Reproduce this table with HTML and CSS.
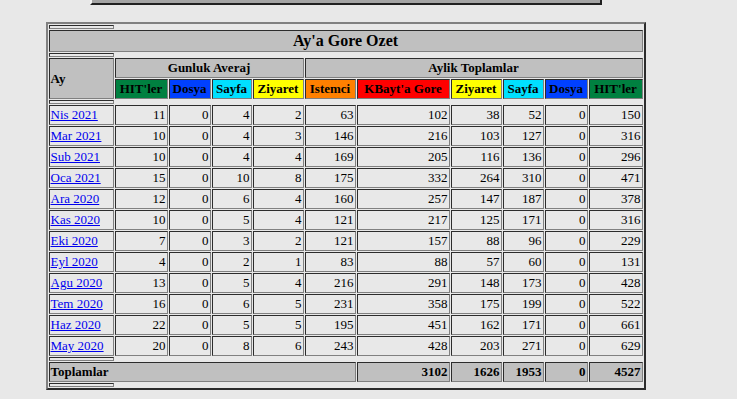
FILE: index.html
```html
<!DOCTYPE html>
<html>
<head>
<meta charset="utf-8">
<link rel="stylesheet" href="styles.css">
</head>
<body>
<div class="page">
  <div class="graph"></div>
  <table class="summary">
    <colgroup>
      <col class="w-month"><col class="w-hits1"><col class="w-files1"><col class="w-pages1"><col class="w-visits1">
      <col class="w-sites"><col class="w-kbytes"><col class="w-visits2"><col class="w-pages2"><col class="w-files2"><col class="w-hits2">
    </colgroup>
    <tr><th class="spacer"></th></tr>
    <tr><th colspan="11" class="title">Ay'a Gore Ozet</th></tr>
    <tr><th class="spacer"></th></tr>
    <tr>
      <th rowspan="2" class="month-head">Ay</th>
      <th colspan="4" class="group">Gunluk Averaj</th>
      <th colspan="6" class="group">Aylik Toplamlar</th>
    </tr>
    <tr>
      <th class="hd c-hits">HIT'ler</th>
      <th class="hd c-files">Dosya</th>
      <th class="hd c-pages">Sayfa</th>
      <th class="hd c-visits">Ziyaret</th>
      <th class="hd c-sites">Istemci</th>
      <th class="hd c-kbytes">KBayt'a Gore</th>
      <th class="hd c-visits">Ziyaret</th>
      <th class="hd c-pages">Sayfa</th>
      <th class="hd c-files">Dosya</th>
      <th class="hd c-hits">HIT'ler</th>
    </tr>
    <tr><th class="spacer"></th></tr>
    <tr><td class="mon"><a href="#">Nis 2021</a></td><td>11</td><td>0</td><td>4</td><td>2</td><td>63</td><td>102</td><td>38</td><td>52</td><td>0</td><td>150</td></tr>
    <tr><td class="mon"><a href="#">Mar 2021</a></td><td>10</td><td>0</td><td>4</td><td>3</td><td>146</td><td>216</td><td>103</td><td>127</td><td>0</td><td>316</td></tr>
    <tr><td class="mon"><a href="#">Sub 2021</a></td><td>10</td><td>0</td><td>4</td><td>4</td><td>169</td><td>205</td><td>116</td><td>136</td><td>0</td><td>296</td></tr>
    <tr><td class="mon"><a href="#">Oca 2021</a></td><td>15</td><td>0</td><td>10</td><td>8</td><td>175</td><td>332</td><td>264</td><td>310</td><td>0</td><td>471</td></tr>
    <tr><td class="mon"><a href="#">Ara 2020</a></td><td>12</td><td>0</td><td>6</td><td>4</td><td>160</td><td>257</td><td>147</td><td>187</td><td>0</td><td>378</td></tr>
    <tr><td class="mon"><a href="#">Kas 2020</a></td><td>10</td><td>0</td><td>5</td><td>4</td><td>121</td><td>217</td><td>125</td><td>171</td><td>0</td><td>316</td></tr>
    <tr><td class="mon"><a href="#">Eki 2020</a></td><td>7</td><td>0</td><td>3</td><td>2</td><td>121</td><td>157</td><td>88</td><td>96</td><td>0</td><td>229</td></tr>
    <tr><td class="mon"><a href="#">Eyl 2020</a></td><td>4</td><td>0</td><td>2</td><td>1</td><td>83</td><td>88</td><td>57</td><td>60</td><td>0</td><td>131</td></tr>
    <tr><td class="mon"><a href="#">Agu 2020</a></td><td>13</td><td>0</td><td>5</td><td>4</td><td>216</td><td>291</td><td>148</td><td>173</td><td>0</td><td>428</td></tr>
    <tr><td class="mon"><a href="#">Tem 2020</a></td><td>16</td><td>0</td><td>6</td><td>5</td><td>231</td><td>358</td><td>175</td><td>199</td><td>0</td><td>522</td></tr>
    <tr><td class="mon"><a href="#">Haz 2020</a></td><td>22</td><td>0</td><td>5</td><td>5</td><td>195</td><td>451</td><td>162</td><td>171</td><td>0</td><td>661</td></tr>
    <tr><td class="mon"><a href="#">May 2020</a></td><td>20</td><td>0</td><td>8</td><td>6</td><td>243</td><td>428</td><td>203</td><td>271</td><td>0</td><td>629</td></tr>
    <tr><th class="spacer"></th></tr>
    <tr class="totals">
      <th colspan="6" class="tot-label">Toplamlar</th>
      <th>3102</th><th>1626</th><th>1953</th><th>0</th><th>4527</th>
    </tr>
    <tr><th class="spacer"></th></tr>
  </table>
</div>
</body>
</html>
```

FILE: styles.css
```css
html, body {
  background: #e8e8e8;
}
body {
  margin: 0 8px;
  font-family: "Liberation Serif", "Times New Roman", serif;
  color: #000;
}
.page {
  width: 675px;
  display: flex;
  flex-direction: column;
  align-items: center;
}
.graph {
  width: 508px;
  height: 3px;
  background: #a4a4a4;
  border-left: 2px solid #f4f4f4;
  border-right: 2px solid #202020;
  border-bottom: 2px solid #202020;
  margin-bottom: 17px;
  margin-left: 0;
}
.summary {
  border-collapse: separate;
  border-spacing: 1px;
  border: 2px outset #808080;
  table-layout: fixed;
  width: 600px;
  font-size: 13px;
  line-height: 16px;
}
.summary td, .summary th {
  border: 1px inset #808080;
  padding: 1px;
  box-sizing: border-box;
}
.w-month { width: 65px; }
.w-hits1 { width: 53px; }
.w-files1 { width: 42px; }
.w-pages1 { width: 40px; }
.w-visits1 { width: 51px; }
.w-sites { width: 51px; }
.w-kbytes { width: 93px; }
.w-visits2 { width: 51px; }
.w-pages2 { width: 41px; }
.w-files2 { width: 43px; }
.w-hits2 { width: 54px; }

.summary th.spacer {
  height: 4px;
  padding: 0;
}
.summary th.title {
  background: #c0c0c0;
  font-size: 16px;
  line-height: 18px;
  text-align: center;
}
.summary th.month-head {
  background: #c0c0c0;
  text-align: left;
  vertical-align: middle;
  padding-left: 1px;
}
.summary th.group {
  background: #c0c0c0;
  text-align: center;
}
.summary th.hd {
  text-align: center;
  white-space: nowrap;
}
.c-hits { background: #008040; }
.c-files { background: #0040ff; }
.c-pages { background: #00e0ff; }
.c-visits { background: #ffff00; }
.c-sites { background: #ff8000; }
.c-kbytes { background: #ff0000; }

.summary td {
  text-align: right;
  white-space: nowrap;
}
.summary td.mon {
  text-align: left;
}
.summary td.mon a {
  color: #0000ee;
}
.totals th {
  background: #c0c0c0;
  text-align: right;
}
.totals th.tot-label {
  text-align: left;
}
```
